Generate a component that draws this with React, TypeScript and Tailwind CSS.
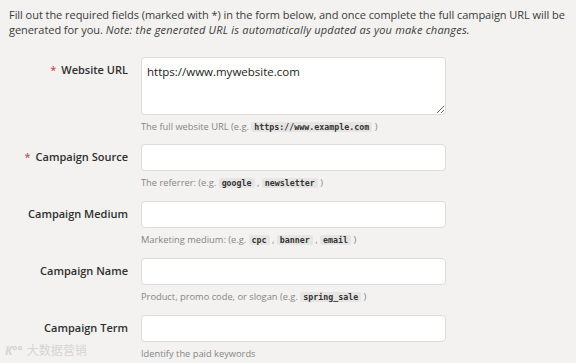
import React from "react";

const Code = ({ children }: { children: React.ReactNode }) => (
  <code
    className="rounded-[2px] bg-[#e6e5e3] px-[3px] text-[8.3px] font-bold leading-[12px] text-[#333]"
    style={{ fontFamily: '"DejaVu Sans Mono", "Liberation Mono", monospace' }}
  >
    {children}
  </code>
);

const Row = ({
  label,
  required,
  help,
  textarea,
}: {
  label: string;
  required?: boolean;
  help: React.ReactNode;
  textarea?: boolean;
}) => (
  <div className="flex">
    <div className="flex h-[27px] w-[128px] shrink-0 items-center justify-end text-[11px] font-semibold text-[#2f2f2f]">
      {required && <span className="mr-[5px] text-[#c4525c]">*</span>}
      {label}
    </div>
    <div className="ml-[13px] w-[305px] shrink-0">
      {textarea ? (
        <textarea
          defaultValue="https://www.mywebsite.com"
          className="block h-[58px] w-full rounded-[4px] border border-[#dcdbd9] bg-white px-[5px] py-[5px] text-[11.5px] leading-[17px] text-[#222] outline-none"
        />
      ) : (
        <input className="block h-[27px] w-full rounded-[4px] border border-[#dcdbd9] bg-white outline-none" />
      )}
      <div
        className={`${textarea ? "h-[29px]" : "h-[30px]"} pt-[5px] text-[9.3px] leading-[13px] whitespace-nowrap text-[#858585]`}
      >
        {help}
      </div>
    </div>
  </div>
);

export default function App() {
  return (
    <div
      className="relative h-[363px] w-[576px] overflow-hidden bg-[#f3f2f0]"
      style={{ fontFamily: '"Open Sans", "Noto Sans CJK SC", sans-serif' }}
    >
      <p className="px-[9px] pt-[7px] text-[11px] leading-[15px] tracking-[-0.05px] whitespace-nowrap text-[#3a3a3a]">
        Fill out the required fields (marked with *) in the form below, and once complete the full campaign URL will be
        <br />
        generated for you.{" "}
        <em className="tracking-[0.2px]">Note: the generated URL is automatically updated as you make changes.</em>
      </p>
      <div className="mt-[20px]">
        <Row
          label="Website URL"
          required
          textarea
          help={
            <>
              The full website URL (e.g. <Code>https://www.example.com</Code> )
            </>
          }
        />
        <Row
          label="Campaign Source"
          required
          help={
            <>
              The referrer: (e.g. <Code>google</Code> , <Code>newsletter</Code> )
            </>
          }
        />
        <Row
          label="Campaign Medium"
          help={
            <>
              Marketing medium: (e.g. <Code>cpc</Code> , <Code>banner</Code> , <Code>email</Code> )
            </>
          }
        />
        <Row
          label="Campaign Name"
          help={
            <>
              Product, promo code, or slogan (e.g. <Code>spring_sale</Code> )
            </>
          }
        />
        <Row label="Campaign Term" help={<>Identify the paid keywords</>} />
      </div>
      <div className="absolute bottom-[5px] left-[5px] flex items-center gap-[4px] text-[12px] leading-[14px] text-[#d6d5d3]">
        <span className="font-bold italic">K°°</span>
        <span>大数据营销</span>
      </div>
    </div>
  );
}
